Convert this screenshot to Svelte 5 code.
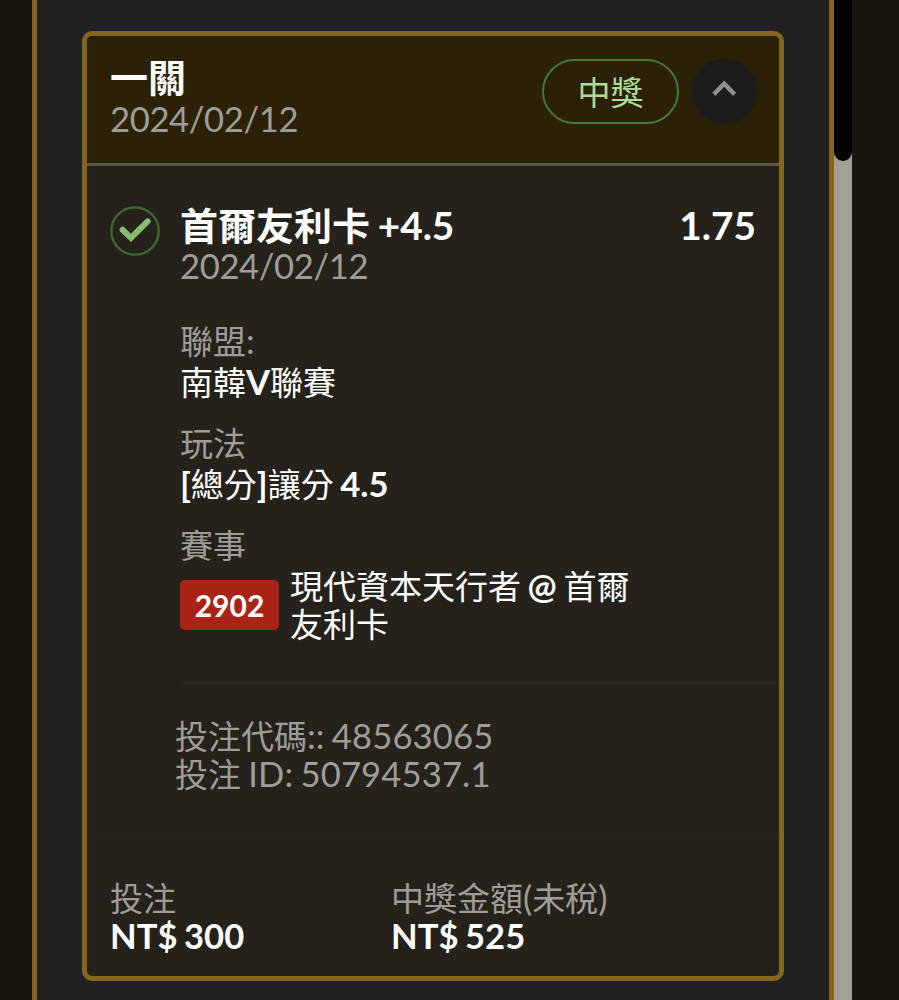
<script>
  const details = [
    { label: '聯盟:', value: '南韓V聯賽' },
    { label: '玩法', value: '[總分]讓分 4.5' }
  ];
  const teams = ['現代資本天行者 @ 首爾', '友利卡'];
  const totals = [
    { label: '投注', value: 'NT$ 300' },
    { label: '中獎金額(未稅)', value: 'NT$ 525' }
  ];

  // Splits a string into Latin and Han runs, which are set at different sizes.
  const runs = (s) => s.match(/[\u3400-\u9fff]+|[^\u3400-\u9fff]+/g) ?? [];
  const isHan = (s) => /[\u3400-\u9fff]/.test(s);
</script>

{#snippet mixed(s)}{#each runs(s) as r}<span class={isHan(r) ? 'han' : 'latin'}>{r}</span>{/each}{/snippet}

<div class="page">
  <main class="panel">
    <article class="card">
      <header class="head">
        <div class="heading">
          <h1 class="line title">{@render mixed('一關')}</h1>
          <div class="line muted date">{@render mixed('2024/02/12')}</div>
        </div>
        <span class="status">{@render mixed('中獎')}</span>
        <button class="toggle" aria-label="收合">
          <svg viewBox="0 0 64 64" width="64" height="64"><path d="M21.8 35.4 32.2 24.6 42.6 35.4" fill="none" stroke="#8f8f8f" stroke-width="4.4" /></svg>
        </button>
      </header>

      <section class="bet">
        <svg class="check" viewBox="0 0 50 50" width="50" height="50">
          <circle cx="25" cy="25" r="23.7" fill="none" stroke="#3c6b2b" stroke-width="2.3" />
          <path d="M12.6 23.8 21 31.8 37.6 15.4" fill="none" stroke="#86bd70" stroke-width="6" stroke-linecap="round" />
        </svg>
        <div class="info">
          <div class="row">
            <h2 class="line title">{@render mixed('首爾友利卡 +4.5')}</h2>
            <strong class="line title">{@render mixed('1.75')}</strong>
          </div>
          <div class="line muted date">{@render mixed('2024/02/12')}</div>

          <dl>
            {#each details as d}
              <div class="field">
                <dt class="muted">{@render mixed(d.label)}</dt>
                <dd class="value">{@render mixed(d.value)}</dd>
              </div>
            {/each}
            <div class="field">
              <dt class="muted">{@render mixed('賽事')}</dt>
              <dd class="match">
                <span class="code">2902</span>
                <div>
                  {#each teams as t}
                    <div class="value">{@render mixed(t)}</div>
                  {/each}
                </div>
              </dd>
            </div>
          </dl>

          <div class="ids muted">
            <div class="line">{@render mixed('投注代碼:: 48563065')}</div>
            <div class="line">{@render mixed('投注 ID: 50794537.1')}</div>
          </div>
        </div>
      </section>

      <footer class="totals">
        {#each totals as t}
          <div>
            <div class="line muted">{@render mixed(t.label)}</div>
            <div class="line amount">{@render mixed(t.value)}</div>
          </div>
        {/each}
      </footer>
    </article>
  </main>
  <div class="scroll"><div class="thumb"></div></div>
</div>

<style>
  :global(body) { background: #1a160f; }
  .page {
    display: flex;
    box-sizing: border-box;
    width: 899px;
    height: 1000px;
    padding-left: 32px;
    overflow: hidden;
    background: #1a160f;
    color: #fff;
    font-family: Lato, "Noto Sans CJK TC", sans-serif;
    font-size: 33px;
    line-height: 38px;
  }
  h1, h2, dl, dd { margin: 0; }
  .panel {
    box-sizing: border-box;
    width: 802px;
    height: 1000px;
    padding: 31px 45px 0;
    border: solid #86651f;
    border-width: 0 5px;
    background: #222;
  }
  .card {
    box-sizing: border-box;
    width: 702px;
    height: 950px;
    border: 5px solid #86651f;
    border-radius: 10px;
    background: #25211b;
  }
  .line, dt, .value { line-height: 38px; white-space: nowrap; }
  .han { font-size: 33px; line-height: 1px; }
  .latin { font-size: 34.6px; line-height: 1px; white-space: pre-wrap; word-spacing: -1.8px; }
  .muted { color: #a09d98; font-weight: 400; }
  .title { font-size: 38px; font-weight: 700; }
  .title .han { font-size: 38px; }
  .title .latin { font-size: 38.8px; }
  .date .latin { letter-spacing: -0.35px; }

  .head {
    display: flex;
    box-sizing: border-box;
    height: 130px;
    padding: 22.5px 22px 0 23px;
    border-bottom: 3px solid #59564d;
    border-radius: 5px 5px 0 0;
    background: #2b2106;
  }
  .heading { flex: 1; }
  .heading .title { margin-top: -3px; line-height: 42px; }
  .heading .date { margin-top: 2px; }
  .status {
    box-sizing: border-box;
    width: 137px;
    height: 65px;
    border: 2px solid #477830;
    border-radius: 33px;
    color: #aedc96;
    line-height: 62px;
    text-align: center;
  }
  .toggle {
    width: 65px;
    height: 65px;
    margin-left: 13px;
    padding: 0;
    border: 0;
    border-radius: 50%;
    background: #1c1c1d;
  }
  .toggle svg { display: block; }

  .bet { display: flex; gap: 20px; padding: 40px 23px 0 23px; }
  .check { flex: none; }
  .info { flex: 1; }
  .row { display: flex; justify-content: space-between; }
  .row + .date { margin-top: 3px; }
  dl { display: grid; gap: 21px; padding-top: 35px; }
  dt { padding-bottom: 1px; line-height: 42px; }
  .value { font-weight: 400; }
  .value .latin { font-weight: 700; }
  .match { display: flex; align-items: center; gap: 11px; }
  .code {
    width: 99px;
    height: 50px;
    border-radius: 5px;
    background: #a92317;
    font-size: 30px;
    font-weight: 700;
    line-height: 50px;
    text-align: center;
  }
  .ids {
    margin: 39px -23px 0 0;
    padding: 33px 0 42px;
    border-top: 2px solid #292620;
  }
  .ids .line { margin-left: -5px; }
  .ids .latin { letter-spacing: 0.15px; }
  .totals {
    display: grid;
    grid-template-columns: 281px 1fr;
    padding: 41.5px 23px 0;
    border-top: 2px solid #292620;
  }
  .amount .latin { font-weight: 700; }

  .scroll { width: 18px; height: 1000px; background: #a2a198; }
  .thumb { height: 161px; border-radius: 0 0 9px 9px; background: #000; }
</style>
